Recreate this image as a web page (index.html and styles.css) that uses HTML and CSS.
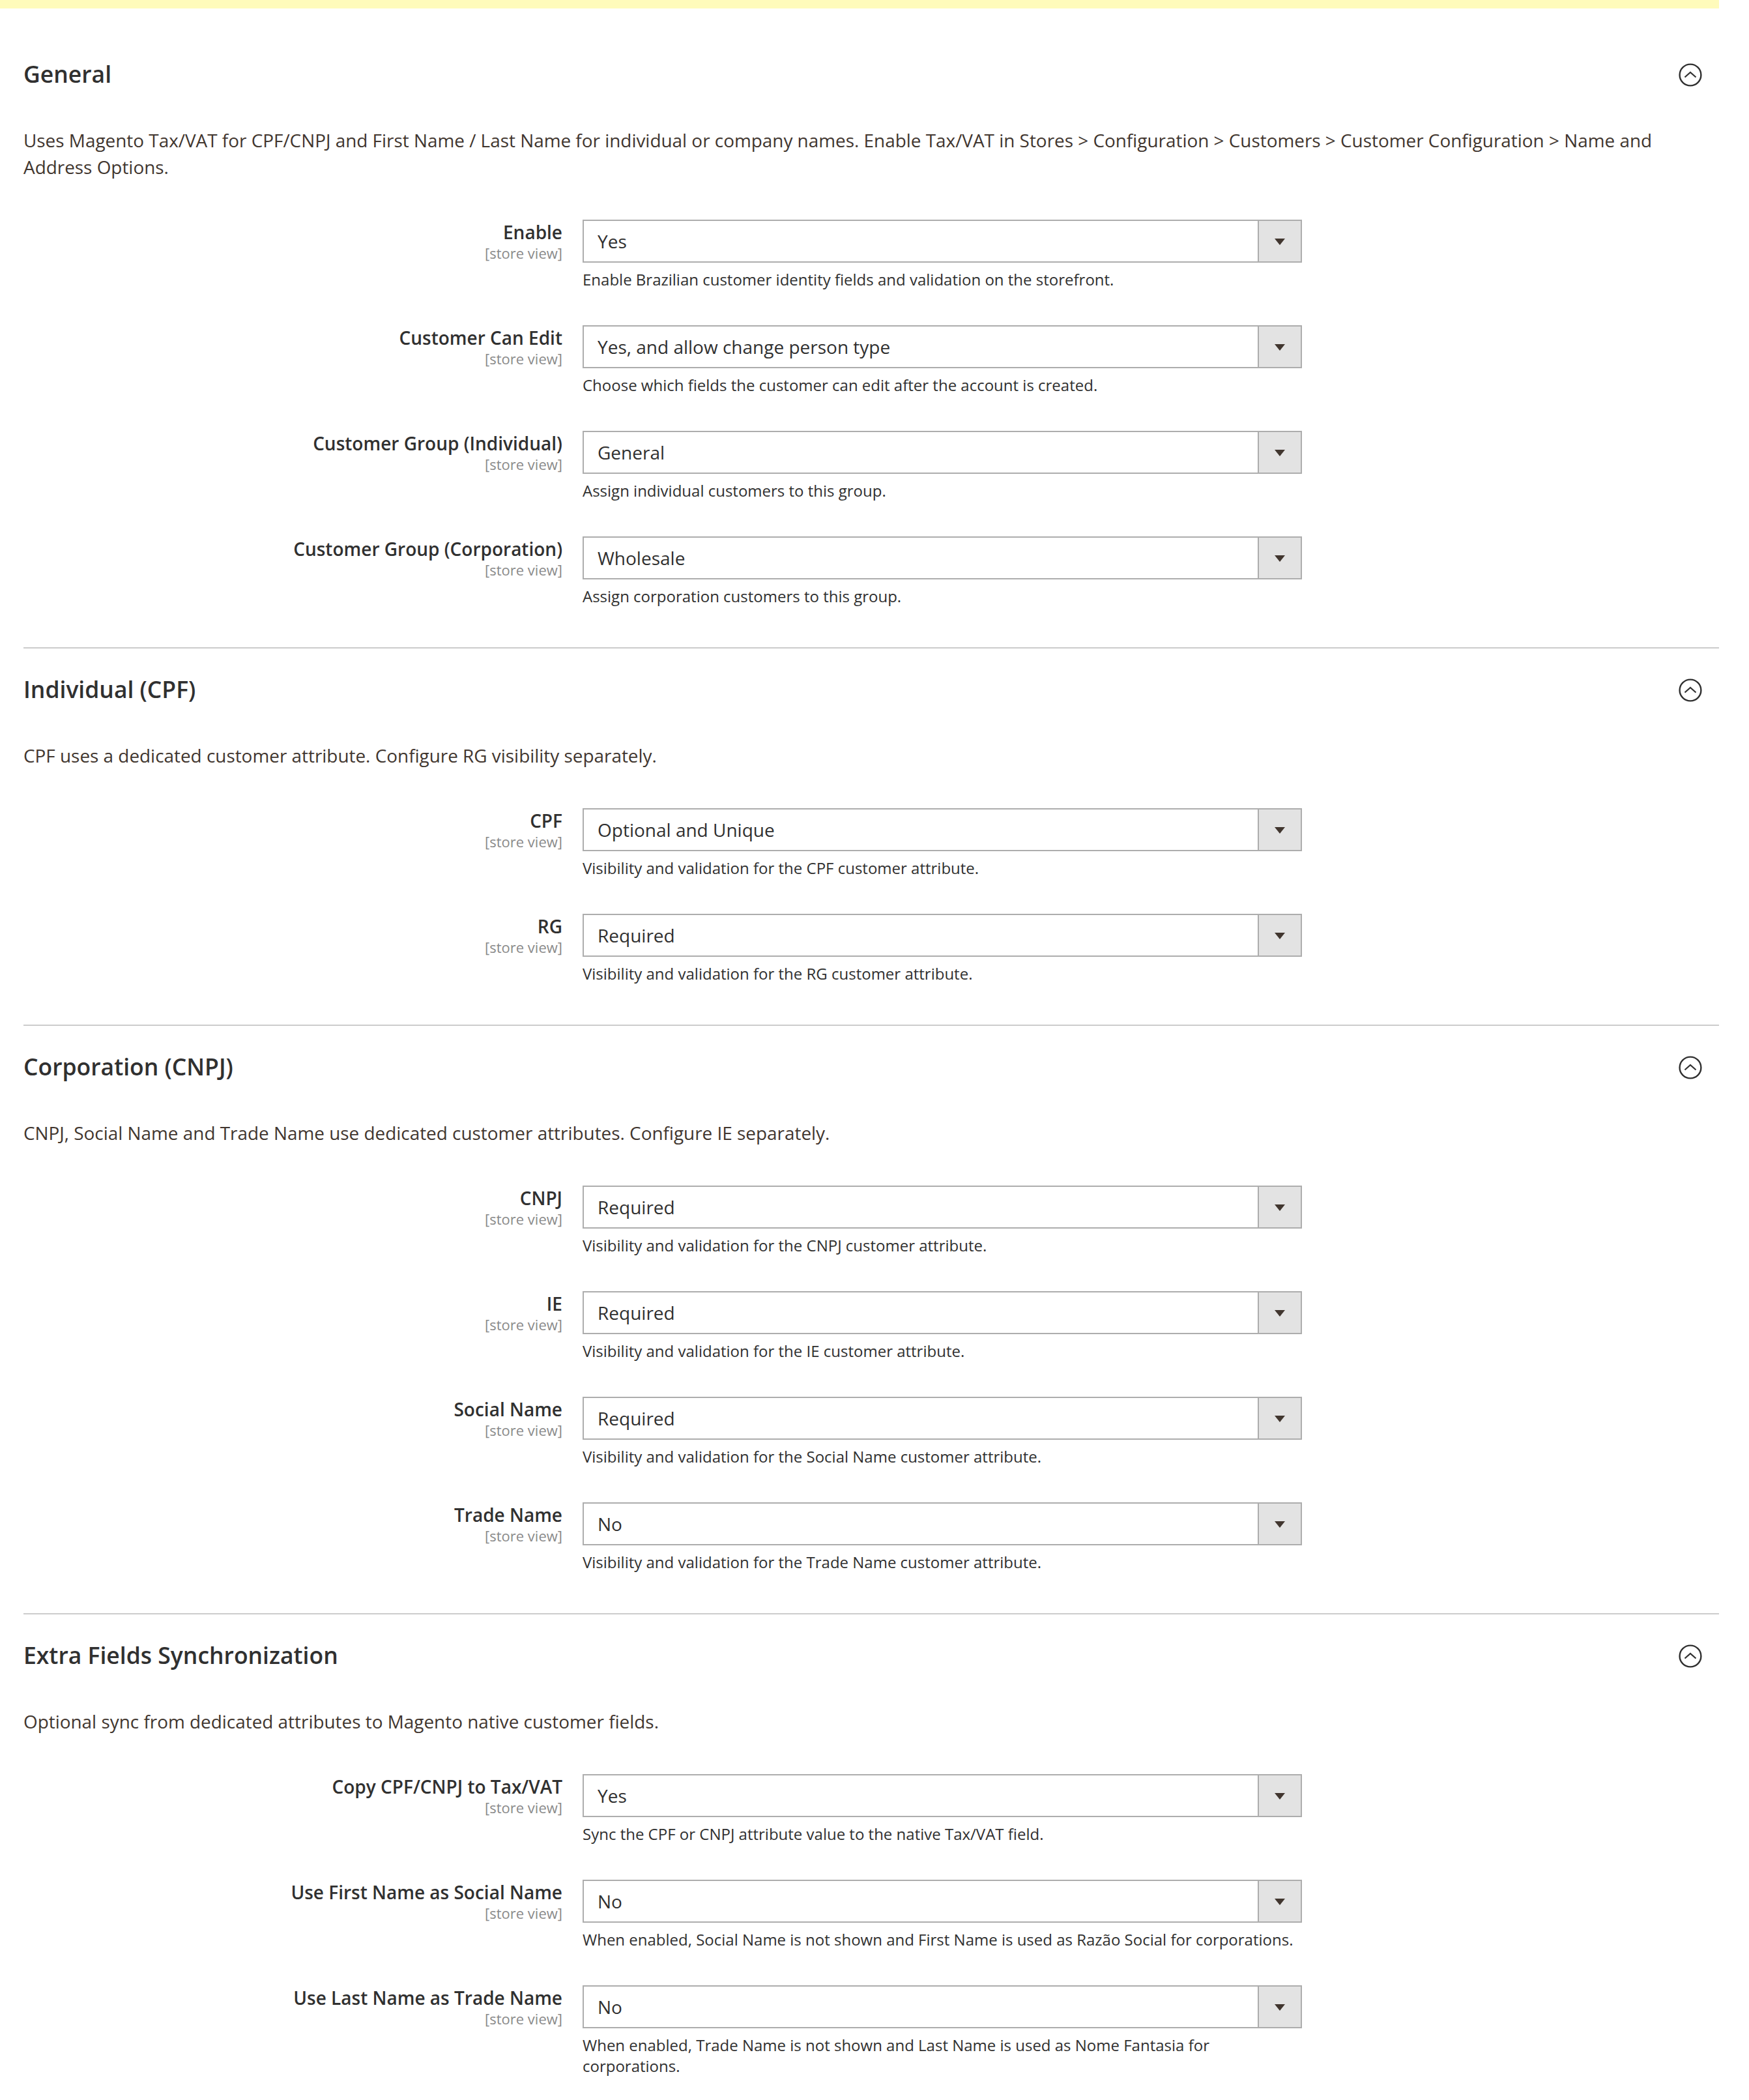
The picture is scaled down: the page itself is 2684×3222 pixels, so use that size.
FILE: index.html
```html
<!DOCTYPE html>
<html lang="en">
<head>
  <meta charset="UTF-8">
  <title>Brazilian Customer Configuration</title>
  <link rel="stylesheet" href="styles.css">
</head>
<body>
  <div class="page">
    <div class="notice-bar"></div>

    <div class="section first">
      <div class="section-head">
        <h2 class="section-title">General</h2>
        <span class="toggle">
          <svg width="36" height="36" viewBox="0 0 36 36"><circle cx="18" cy="18" r="16.4" fill="none" stroke="#303030" stroke-width="2.4"/><polyline points="9.5,21.5 18,14 26.5,21.5" fill="none" stroke="#303030" stroke-width="2.2"/></svg>
        </span>
      </div>
      <p class="section-desc">Uses Magento Tax/VAT for CPF/CNPJ and First Name / Last Name for individual or company names. Enable Tax/VAT in Stores &gt; Configuration &gt; Customers &gt; Customer Configuration &gt; Name and Address Options.</p>

      <div class="field">
        <div class="field-label"><span class="label-text">Enable</span><span class="scope">[store view]</span></div>
        <div class="field-control">
          <div class="select-wrap"><select class="select"><option>Yes</option></select></div>
          <p class="note">Enable Brazilian customer identity fields and validation on the storefront.</p>
        </div>
      </div>

      <div class="field">
        <div class="field-label"><span class="label-text">Customer Can Edit</span><span class="scope">[store view]</span></div>
        <div class="field-control">
          <div class="select-wrap"><select class="select"><option>Yes, and allow change person type</option></select></div>
          <p class="note">Choose which fields the customer can edit after the account is created.</p>
        </div>
      </div>

      <div class="field">
        <div class="field-label"><span class="label-text">Customer Group (Individual)</span><span class="scope">[store view]</span></div>
        <div class="field-control">
          <div class="select-wrap"><select class="select"><option>General</option></select></div>
          <p class="note">Assign individual customers to this group.</p>
        </div>
      </div>

      <div class="field">
        <div class="field-label"><span class="label-text">Customer Group (Corporation)</span><span class="scope">[store view]</span></div>
        <div class="field-control">
          <div class="select-wrap"><select class="select"><option>Wholesale</option></select></div>
          <p class="note">Assign corporation customers to this group.</p>
        </div>
      </div>
    </div>

    <div class="section">
      <div class="section-head">
        <h2 class="section-title">Individual (CPF)</h2>
        <span class="toggle">
          <svg width="36" height="36" viewBox="0 0 36 36"><circle cx="18" cy="18" r="16.4" fill="none" stroke="#303030" stroke-width="2.4"/><polyline points="9.5,21.5 18,14 26.5,21.5" fill="none" stroke="#303030" stroke-width="2.2"/></svg>
        </span>
      </div>
      <p class="section-desc">CPF uses a dedicated customer attribute. Configure RG visibility separately.</p>

      <div class="field">
        <div class="field-label"><span class="label-text">CPF</span><span class="scope">[store view]</span></div>
        <div class="field-control">
          <div class="select-wrap"><select class="select"><option>Optional and Unique</option></select></div>
          <p class="note">Visibility and validation for the CPF customer attribute.</p>
        </div>
      </div>

      <div class="field">
        <div class="field-label"><span class="label-text">RG</span><span class="scope">[store view]</span></div>
        <div class="field-control">
          <div class="select-wrap"><select class="select"><option>Required</option></select></div>
          <p class="note">Visibility and validation for the RG customer attribute.</p>
        </div>
      </div>
    </div>

    <div class="section">
      <div class="section-head">
        <h2 class="section-title">Corporation (CNPJ)</h2>
        <span class="toggle">
          <svg width="36" height="36" viewBox="0 0 36 36"><circle cx="18" cy="18" r="16.4" fill="none" stroke="#303030" stroke-width="2.4"/><polyline points="9.5,21.5 18,14 26.5,21.5" fill="none" stroke="#303030" stroke-width="2.2"/></svg>
        </span>
      </div>
      <p class="section-desc">CNPJ, Social Name and Trade Name use dedicated customer attributes. Configure IE separately.</p>

      <div class="field">
        <div class="field-label"><span class="label-text">CNPJ</span><span class="scope">[store view]</span></div>
        <div class="field-control">
          <div class="select-wrap"><select class="select"><option>Required</option></select></div>
          <p class="note">Visibility and validation for the CNPJ customer attribute.</p>
        </div>
      </div>

      <div class="field">
        <div class="field-label"><span class="label-text">IE</span><span class="scope">[store view]</span></div>
        <div class="field-control">
          <div class="select-wrap"><select class="select"><option>Required</option></select></div>
          <p class="note">Visibility and validation for the IE customer attribute.</p>
        </div>
      </div>

      <div class="field">
        <div class="field-label"><span class="label-text">Social Name</span><span class="scope">[store view]</span></div>
        <div class="field-control">
          <div class="select-wrap"><select class="select"><option>Required</option></select></div>
          <p class="note">Visibility and validation for the Social Name customer attribute.</p>
        </div>
      </div>

      <div class="field">
        <div class="field-label"><span class="label-text">Trade Name</span><span class="scope">[store view]</span></div>
        <div class="field-control">
          <div class="select-wrap"><select class="select"><option>No</option></select></div>
          <p class="note">Visibility and validation for the Trade Name customer attribute.</p>
        </div>
      </div>
    </div>

    <div class="section">
      <div class="section-head">
        <h2 class="section-title">Extra Fields Synchronization</h2>
        <span class="toggle">
          <svg width="36" height="36" viewBox="0 0 36 36"><circle cx="18" cy="18" r="16.4" fill="none" stroke="#303030" stroke-width="2.4"/><polyline points="9.5,21.5 18,14 26.5,21.5" fill="none" stroke="#303030" stroke-width="2.2"/></svg>
        </span>
      </div>
      <p class="section-desc">Optional sync from dedicated attributes to Magento native customer fields.</p>

      <div class="field">
        <div class="field-label"><span class="label-text">Copy CPF/CNPJ to Tax/VAT</span><span class="scope">[store view]</span></div>
        <div class="field-control">
          <div class="select-wrap"><select class="select"><option>Yes</option></select></div>
          <p class="note">Sync the CPF or CNPJ attribute value to the native Tax/VAT field.</p>
        </div>
      </div>

      <div class="field">
        <div class="field-label"><span class="label-text">Use First Name as Social Name</span><span class="scope">[store view]</span></div>
        <div class="field-control">
          <div class="select-wrap"><select class="select"><option>No</option></select></div>
          <p class="note">When enabled, Social Name is not shown and First Name is used as Razão Social for corporations.</p>
        </div>
      </div>

      <div class="field">
        <div class="field-label"><span class="label-text">Use Last Name as Trade Name</span><span class="scope">[store view]</span></div>
        <div class="field-control">
          <div class="select-wrap"><select class="select"><option>No</option></select></div>
          <p class="note">When enabled, Trade Name is not shown and Last Name is used as Nome Fantasia for corporations.</p>
        </div>
      </div>
    </div>
  </div>
</body>
</html>
```

FILE: styles.css
```css
body {
  margin: 0;
  background: #fff;
  font-family: "Open Sans", "Liberation Sans", sans-serif;
  color: #303030;
}

.page {
  width: 2638px;
}

.notice-bar {
  height: 13px;
  background: #fffbbb;
}

.section {
  margin-left: 36px;
  padding-top: 37px;
  padding-bottom: 8px;
  border-top: 2px solid #cccccc;
}

.section.first {
  border-top: none;
  padding-top: 75px;
}

.section-head {
  display: flex;
  align-items: center;
  justify-content: space-between;
  height: 50px;
  padding-right: 26px;
}

.section-title {
  margin: 0;
  font-size: 35.5px;
  font-weight: 600;
  line-height: 50px;
  color: #303030;
}

.toggle {
  display: flex;
  width: 36px;
  height: 36px;
  margin-top: 3px;
}

.section-desc {
  margin: 57px 0 60px;
  font-size: 27.9px;
  line-height: 41px;
  color: #41362f;
}

.field {
  display: grid;
  grid-template-columns: 827px 1104px;
  column-gap: 31px;
  margin-bottom: 54px;
}

.field-label {
  display: flex;
  flex-direction: column;
  align-items: flex-end;
  text-align: right;
}

.label-text {
  font-size: 28px;
  font-weight: 600;
  line-height: 39px;
  color: #303030;
}

.scope {
  font-size: 22px;
  line-height: 25px;
  color: #8a8a8a;
}

.select-wrap {
  position: relative;
  height: 66px;
}

.select {
  -webkit-appearance: none;
  appearance: none;
  box-sizing: border-box;
  width: 100%;
  height: 66px;
  margin: 0;
  padding: 0 80px 0 21px;
  border: 2px solid #adadad;
  border-radius: 0;
  background: #fff;
  font-family: "Open Sans", "Liberation Sans", sans-serif;
  font-size: 28px;
  color: #303030;
}

/* grey arrow box over the right end of the select */
.select-wrap::before {
  content: "";
  position: absolute;
  top: 0;
  right: 0;
  width: 68px;
  height: 66px;
  box-sizing: border-box;
  border: 2px solid #adadad;
  background: #e3e3e3;
  pointer-events: none;
}

.select-wrap::after {
  content: "";
  position: absolute;
  top: 29px;
  right: 26px;
  border-left: 8px solid transparent;
  border-right: 8px solid transparent;
  border-top: 10px solid #41362f;
  pointer-events: none;
}

.note {
  margin: 10px 0 0;
  font-size: 24px;
  line-height: 32px;
  color: #303030;
}
```
